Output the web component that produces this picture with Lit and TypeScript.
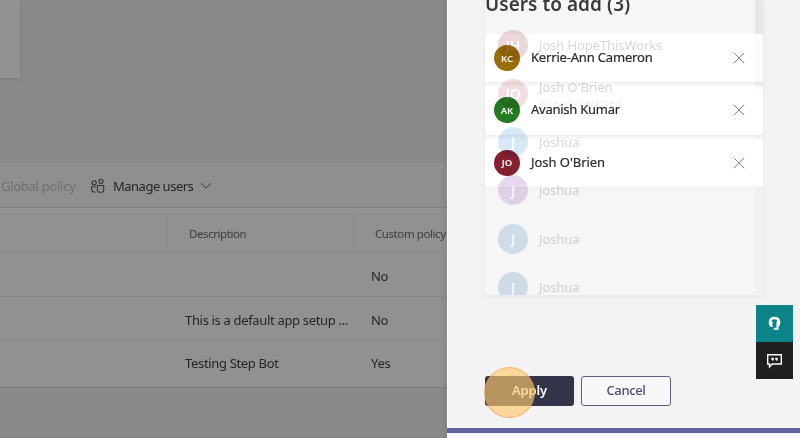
import { LitElement, html, css, svg } from "lit";
import { customElement } from "lit/decorators.js";
import { styleMap } from "lit/directives/style-map.js";

const FONT = css`"Noto Sans", "Open Sans", sans-serif`;

const suggestions = [
  { initials: "JH", name: "Josh HopeThisWorks", note: "", color: "#8a2a35" },
  { initials: "JO", name: "Josh O'Brien", note: "Already selected", color: "#b8505c" },
  { initials: "J", name: "Joshua", note: "", color: "#2f86d0" },
  { initials: "J", name: "joshua", note: "", color: "#7a35aa" },
  { initials: "J", name: "Joshua", note: "", color: "#1f70b8" },
  { initials: "J", name: "Joshua", note: "", color: "#2a62b0" },
];

const users = [
  { initials: "KC", name: "Kerrie-Ann Cameron", color: "#986f0b", spacing: "-0.18px" },
  { initials: "AK", name: "Avanish Kumar", color: "#237b22", spacing: "-0.25px" },
  { initials: "JO", name: "Josh O'Brien", color: "#84202f", spacing: "-0.05px" },
];

const policies = [
  { description: "", custom: "No" },
  { description: "This is a default app setup ...", custom: "No" },
  { description: "Testing Step Bot", custom: "Yes" },
];

@customElement("policy-page")
export class PolicyPage extends LitElement {
  static styles = css`
    :host { display: flex; flex-direction: column; height: 438px; overflow: hidden; position: relative;
      background: #8a8a88; font-family: ${FONT}; color: #252525; white-space: nowrap; }
    .card { width: 20px; height: 78px; background: #929292; box-shadow: 0 1px 4px rgba(0,0,0,.12); }
    .bar { margin-top: 85px; height: 45px; box-sizing: border-box; background: #8f8f8f;
      border-bottom: 1px solid #7f7f7f; display: flex; align-items: center; font-size: 13px; padding-top: 1px; }
    .global { width: 90px; color: #6f6f6f; padding-left: 1px; box-sizing: border-box; letter-spacing: -.28px; }
    .people { width: 16px; height: 16px; margin-right: 7px; }
    .manage { width: 87px; letter-spacing: -.5px; }
    .chev { width: 12px; height: 8px; stroke-width: .9; }
    .row { display: grid; grid-template-columns: 167px 186px 1fr; background: #919191; box-sizing: border-box;
      border-bottom: 1px solid #888; align-items: center; font-size: 13px; }
    .head { height: 45px; font-size: 11.5px; color: #3d3d3d; align-items: stretch; line-height: 50px; border-top: 1px solid #989898; }
    .head > span + span { border-left: 1px solid #8b8b8b; padding-left: 21px; letter-spacing: -.42px; }
    .body { height: 44px; padding-top: 2px; }
    .body > span + span { padding-left: 18px; letter-spacing: -.33px; }
    .body:last-of-type { height: 47px; border-bottom: 1px solid #7c7c7b; padding: 0 0 2px; }
    .edge { position: absolute; right: 0; top: 0; bottom: 0; width: 8px;
      background: linear-gradient(90deg, rgba(0,0,0,0), rgba(0,0,0,.06)); }
    svg { fill: none; stroke: #333; stroke-width: 1.1; display: block; flex: none; }
  `;
  render() {
    return html`
      <div class="card"></div>
      <div class="bar">
        <span class="global">Global policy</span>
        <svg class="people" viewBox="0 0 16 16">
          <circle cx="4.2" cy="4.8" r="2.1"/><circle cx="11" cy="3.3" r="2.1"/>
          <path d="M5.8 8.7H1.6V11.5Q1.6 14.2 5.2 14.2M7.4 7.5H13.7V12.3Q13.7 14.2 11.8 14.2H9.3Q7.4 14.2 7.4 12.3Z"/>
        </svg>
        <span class="manage">Manage users</span>
        <svg class="chev" viewBox="0 0 12 8"><path d="M1 1.2 6 6.2 11 1.2"/></svg>
      </div>
      <div class="row head"><span></span><span>Description</span><span>Custom policy</span></div>
      <section>
        ${policies.map((p) => html`<div class="row body"><span></span><span>${p.description}</span><span>${p.custom}</span></div>`)}
      </section>
      <div class="edge" role="presentation"></div>
    `;
  }
}

@customElement("users-panel")
export class UsersPanel extends LitElement {
  static styles = css`
    :host { display: flex; flex-direction: column; height: 438px; box-sizing: border-box; position: relative;
      overflow: hidden; background: #f3f3f3; font-family: ${FONT}; color: #2b2b2b; white-space: nowrap;
      padding-left: 38px; box-shadow: inset 1px 0 #fff; }
    h2 { margin: -9px 0 0; height: 43px; line-height: 26px; font-size: 19px; font-weight: 600; color: #3a3a3a;
      letter-spacing: .04px; position: relative; z-index: 1; }
    .users { display: flex; flex-direction: column; gap: 4px; width: 278px; height: 153px; position: relative; z-index: 1; }
    .user { flex: 1; display: flex; align-items: center; background: #fff; border-radius: 2px;
      padding: 0 18px 0 9px; box-shadow: 0 1px 2px rgba(0,0,0,.04); }
    .avatar { width: 26px; height: 26px; border-radius: 50%; color: #fff; font-size: 9.5px; font-weight: 600;
      display: flex; align-items: center; justify-content: center; margin-right: 11px; flex: none; }
    .name { flex: 1; font-size: 13px; font-weight: 400; -webkit-text-stroke: .2px #2b2b2b; position: relative; top: -1px; }
    .close { width: 12px; height: 12px; fill: none; stroke: #777; stroke-width: .9; }
    .ghosts { position: absolute; z-index: 2; left: 38px; top: 0; width: 270px; height: 295px; overflow: hidden;
      opacity: .19; mix-blend-mode: multiply; box-sizing: border-box; padding-top: 21px; }
    .ghost { height: 48.4px; display: flex; align-items: center; padding-left: 13px; font-size: 13px; color: #222; letter-spacing: -.1px; }
    .ghost .avatar { width: 30px; height: 30px; font-size: 14px; }
    .ghost small { display: block; font-size: 11px; line-height: 13px; color: #aaa; }
    .sheet { position: absolute; left: 38px; top: 0; width: 278px; height: 295px; box-sizing: border-box;
      background: rgba(255,255,255,.25); border-right: 8px solid rgba(0,0,0,.02); box-shadow: 0 2px 6px rgba(0,0,0,.05); }
    .thumb { position: absolute; z-index: 2; left: 308px; top: 0; width: 8px; height: 90px; background: rgba(0,0,0,.015); }
    .thumb::before { content: ""; display: block; height: 34px; background: rgba(0,0,0,.02); }
    .actions { display: flex; gap: 7px; margin-top: 189px; }
    button { font: 600 13px ${FONT}; height: 30px; box-sizing: border-box; border-radius: 3px; padding: 0 0 2px; letter-spacing: -.2px; }
    .apply { width: 89px; background: #33344a; border: 0; color: #fff; }
    .cancel { width: 90px; background: #f8f8f8; border: 1px solid #5d5e86; color: #4d4e74; font-weight: 500; letter-spacing: -.35px; }
    .click { position: absolute; left: 37px; top: 367px; width: 51px; height: 51px; box-sizing: border-box;
      border-radius: 50%; background: rgba(255,199,107,.65); border: 1.5px solid rgba(232,146,72,.55); }
    .foot { margin: 22px 0 0 -38px; height: 5px; background: #6264a0; border-bottom: 5px solid #f9f9f9; }
    .support { position: absolute; right: 7px; top: 305px; width: 37px; height: 74px; display: grid; grid-template-rows: 1fr 1fr; }
    .support > span { display: grid; place-items: center; background: #0b8489; }
    .support > span + span { background: #211e1e; }
    .support svg { width: 17px; height: 17px; }
  `;
  render() {
    return html`
      <div class="sheet"></div>
      <h2>Users to add (3)</h2>
      <div class="users">
        ${users.map((u) => html`<div class="user">
          <span class="avatar" style=${styleMap({ background: u.color })}>${u.initials}</span>
          <span class="name" style=${styleMap({ letterSpacing: u.spacing })}>${u.name}</span>
          <svg class="close" viewBox="0 0 12 12">${svg`<path d="M.8.8 11.2 11.2M11.2.8.8 11.2"/>`}</svg>
        </div>`)}
      </div>
      <div class="thumb"></div>
      <div class="ghosts">
        ${suggestions.map((s) => html`<div class="ghost">
          <span class="avatar" style=${styleMap({ background: s.color })}>${s.initials}</span>
          <span>${s.name}${s.note ? html`<small>${s.note}</small>` : ""}</span>
        </div>`)}
      </div>
      <div class="actions"><button class="apply">Apply</button><button class="cancel">Cancel</button></div>
      <div class="click"></div>
      <div class="foot"></div>
      <div class="support">
        <span><svg viewBox="0 0 17 17">
          <path d="M5 10.500C2.600 7.500 3.800 3 8.500 3s5.900 4.500 3.500 7.500" fill="none" stroke="#fff" stroke-width="2.400"/>
          <path d="M3.200 6.300h3.300v5.700H4.900L3.200 10.300ZM10.500 6.300h3.300v4l-1.400 1.700h-1.900Z" fill="#fff"/>
          <path d="M11.500 11.500v2.300H7.800" fill="none" stroke="#fff" stroke-width="2"/>
        </svg></span>
        <span><svg viewBox="0 0 17 17">
          <path d="M1.700 2.700h13.600v9.300H6.200L3.500 14.800V12H1.700Z" fill="none" stroke="#fff" stroke-width="1.400"/>
          <path d="M5.300 5.700h2.500v2.600L6.300 9V7.800h-1ZM9.200 5.700h2.500v2.600L10.200 9V7.800h-1Z" fill="#fff"/>
        </svg></span>
      </div>
    `;
  }
}

@customElement("app-root")
export class AppRoot extends LitElement {
  static styles = css`
    :host { display: grid; grid-template-columns: 447px 353px; width: 800px; height: 438px; overflow: hidden; }
  `;
  render() {
    return html`<policy-page></policy-page><users-panel></users-panel>`;
  }
}
